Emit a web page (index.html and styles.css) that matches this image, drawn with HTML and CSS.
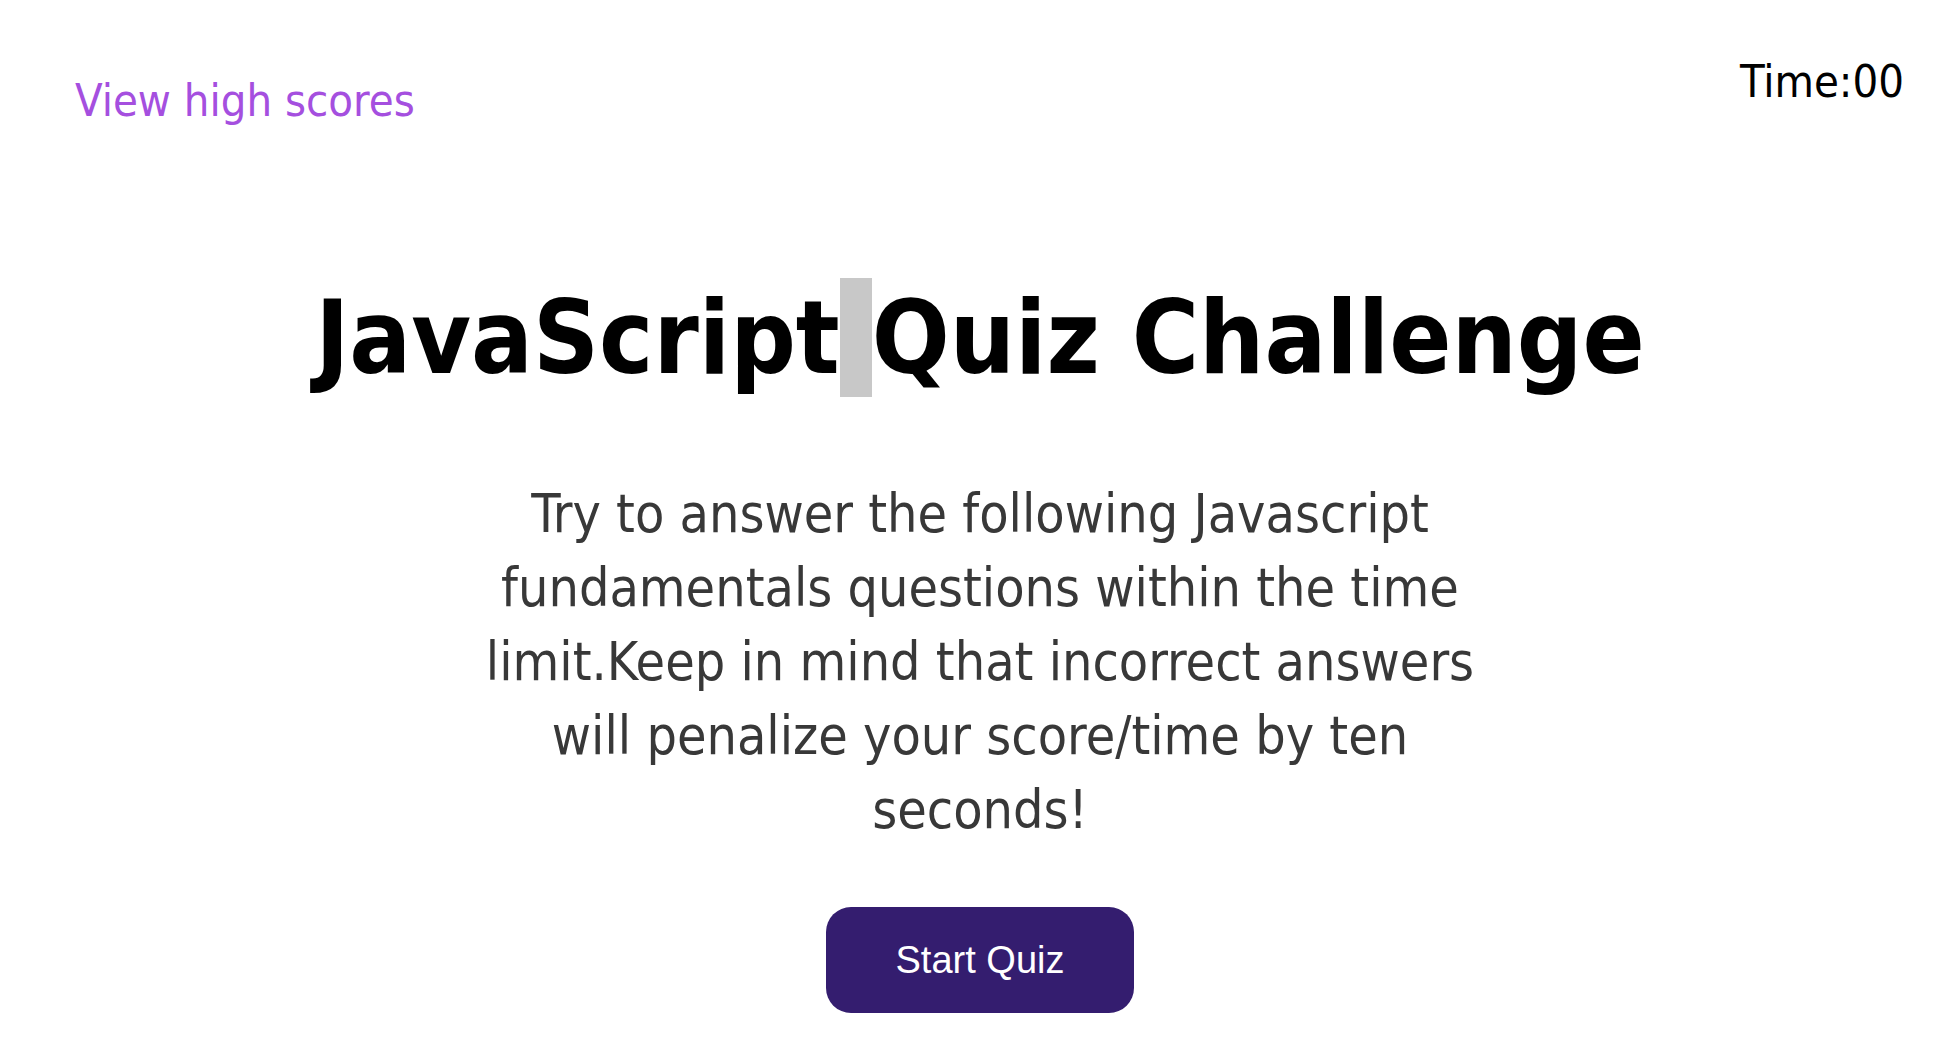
FILE: index.html
```html
<!DOCTYPE html>
<html lang="en">
<head>
<meta charset="utf-8">
<title>JavaScript Quiz Challenge</title>
<link rel="stylesheet" href="styles.css">
</head>
<body>
<header class="topbar">
  <a class="highscores" href="#">View high scores</a>
  <div class="timer">Time:<span>00</span></div>
</header>
<main class="intro">
  <h1 class="title">JavaScript<span class="sel"> </span>Quiz Challenge</h1>
  <p class="desc">Try to answer the following Javascript fundamentals questions within the time limit.Keep in mind that incorrect answers will penalize your score/time by ten seconds!</p>
  <button class="start" type="button">Start Quiz</button>
</main>
</body>
</html>
```

FILE: styles.css
```css
html, body {
  margin: 0;
  padding: 0;
  background: #ffffff;
}

body {
  font-family: "DejaVu Sans", "Lucida Grande", sans-serif;
  font-stretch: condensed;
  color: #000;
}

.topbar {
  display: flex;
  justify-content: space-between;
  align-items: flex-start;
  padding: 55px 56px 0 75px;
}

.highscores {
  margin-top: 19px;
  font-size: 45px;
  line-height: normal;
  color: #a54fdf;
  text-decoration: none;
}

.timer {
  font-size: 45px;
  line-height: normal;
  color: #000;
}

.intro {
  display: flex;
  flex-direction: column;
  align-items: center;
}

.title {
  margin: 152px 0 0 0;
  font-size: 102px;
  font-weight: bold;
  line-height: 118px;
  text-align: center;
}

.sel {
  background: #c8c8c8;
}

.desc {
  width: 1000px;
  margin: 80px 0 0 0;
  font-size: 53.4px;
  line-height: 74px;
  color: #383838;
  text-align: center;
}

.start {
  margin-top: 60px;
  width: 308px;
  height: 106px;
  border: none;
  border-radius: 25px;
  background: #341d6f;
  color: #ffffff;
  font-family: "Liberation Sans", Arial, sans-serif;
  font-stretch: normal;
  font-size: 38px;
  cursor: pointer;
}
```
